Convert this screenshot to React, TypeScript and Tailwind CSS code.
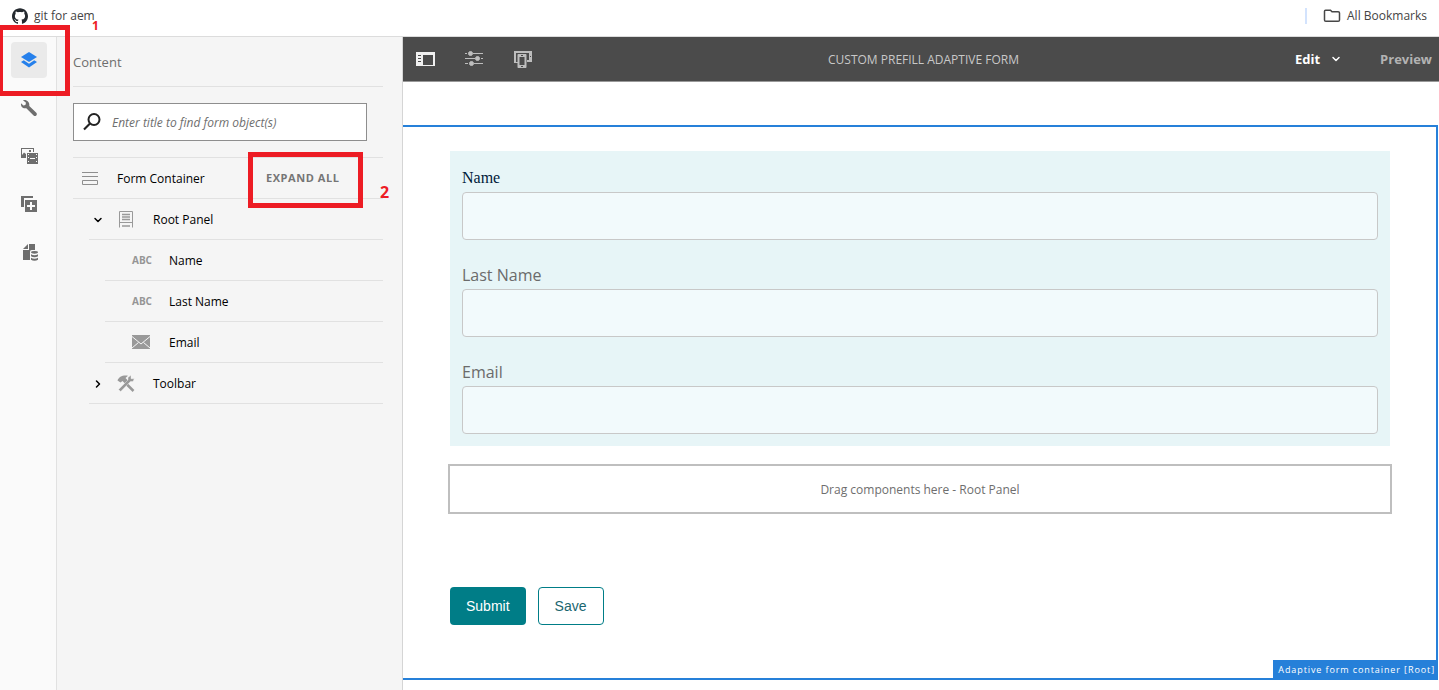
import React, { useState } from "react";
import { SiGithub } from "react-icons/si";
import { ChevronDown, ChevronRight } from "lucide-react";

interface TreeItem {
  id: string;
  title: string;
  icon: React.ReactNode;
}

const LayersIcon = () => (
  <svg viewBox="0 0 18 18" className="w-[18px] h-[18px]" fill="currentColor">
    <path d="M9 1 17 6 9 11 1 6Z" />
    <path d="M3.8 9.3 1 11l8 5.5 8-5.5-2.8-1.7L9 12.7Z" />
  </svg>
);

const WrenchIcon = () => (
  <svg viewBox="0 0 18 18" className="w-[18px] h-[18px]" fill="currentColor">
    <path d="M3 1.2 6 3.8 5.400 6 3.400 6.500 1 4.200C.5 7.500 3 10 6.300 9.200l7.300 7.300c.8.800 2 .8 2.700 0 .8-.8.800-1.900 0-2.700L9.300 7C9.900 3 6.500.2 3 1.200Z" />
  </svg>
);

const AssetsIcon = () => (
  <svg viewBox="0 0 18 18" className="w-[18px] h-[18px]" fill="currentColor">
    <path d="M1 1h13v4h-1V2H2v6l2-2.500L6 7v4H1Z" />
    <path d="M9 3h2v2H9Z" />
    <path fillRule="evenodd" d="M7 6h11v11H7Zm1 1v1h1V7Zm0 3v1h1v-1Zm0 4v1h1v-1Zm8-7v1h1V7Zm0 3v1h1v-1Zm0 4v1h1v-1ZM10 11v1h5v-1Z" />
  </svg>
);

const ComponentsIcon = () => (
  <svg viewBox="0 0 18 18" className="w-[18px] h-[18px]" fill="currentColor">
    <path d="M1 1h12v2H4v9H1Z" />
    <path fillRule="evenodd" d="M5 5h12v12H5Zm5 2v3H7v2h3v3h2v-3h3v-2h-3V7Z" />
  </svg>
);

const DataSourceIcon = () => (
  <svg viewBox="0 0 18 18" className="w-[18px] h-[18px]" fill="currentColor">
    <path d="M9 1h6v6h-3c-2 0-2 1-2 3v7H3V7h6Z" />
    <path d="M8 1v5H3Z" />
    <ellipse cx="14.500" cy="9.300" rx="3.500" ry="1.400" />
    <path d="M11 11.300c2 1.200 5 1.200 7 0v2c-2 1.200-5 1.200-7 0ZM11 14.800c2 1.200 5 1.200 7 0v2c-2 1.200-5 1.200-7 0Z" />
  </svg>
);

const SearchIcon = () => (
  <svg viewBox="0 0 18 18" className="w-[18px] h-[18px]" fill="none" stroke="#222" strokeWidth="2">
    <circle cx="11" cy="6.500" r="5.500" />
    <path d="M7 10.500 1 16.500" strokeWidth="2.200" />
  </svg>
);

const ContainerIcon = () => (
  <svg viewBox="0 0 18 18" className="w-[18px] h-[18px]" fill="none" stroke="#8e8e8e">
    <path d="M1 2.500h16M1 6.500h16M1.500 10.500h15v4h-15Z" />
  </svg>
);

const PanelIcon = () => (
  <svg viewBox="0 0 18 18" className="w-[18px] h-[18px]" fill="none" stroke="#999">
    <path d="M2.500 16.500V.5h13v16M2 11.500h14" />
    <path d="M5 3.500h8M5 6h8M5 8.500h8M5 15h8" strokeWidth="1.500" />
  </svg>
);

const MailIcon = () => (
  <svg viewBox="0 0 18 14" className="w-[18px] h-[14px]">
    <path d="M0 0h18v14H0Z" fill="#999" />
    <path d="M0 1.500 9 9l9-7.500M0 13l6.500-5.500M18 13l-6.500-5.500" fill="none" stroke="#f5f5f5" />
  </svg>
);

const ToolsIcon = () => (
  <svg viewBox="0 0 18 18" className="w-[18px] h-[18px]">
    <path d="M.5 5.500C2 2 5 0 11 .7L8.500 3l2.500 2.500L8 8.500 5.500 6 3.500 7.500Z" fill="#999" />
    <path d="m9 8.500 7.500 7.500" stroke="#999" strokeWidth="2.500" />
    <path d="M1.500 14.500 11 5V2.500L14 .3v3.400h3.200L16 6.500h-2.500l-9.800 10Z" fill="#999" stroke="#f5f5f5" strokeWidth=".4" />
  </svg>
);

const SidePanelIcon = () => (
  <svg viewBox="0 0 20 16" className="w-5 h-4">
    <path fillRule="evenodd" d="M1 1h19v14H1Zm7 3v10h10V4ZM3 4v1h3V4Zm0 3v1h3V7Zm0 3v1h3v-1Z" fill="#f0f0f0" />
  </svg>
);

const SlidersIcon = () => (
  <svg viewBox="0 0 20 18" className="w-5 h-[18px]" fill="#bdbdbd" stroke="#bdbdbd">
    <path d="M1 3.500h2M9 3.500h10M1 8.500h10M17 8.500h2M1 13.500h3M10 13.500h9" />
    <circle cx="6.500" cy="3.500" r="2" />
    <circle cx="13.500" cy="8.500" r="2" />
    <circle cx="7.500" cy="13.500" r="2" />
  </svg>
);

const EmulatorIcon = () => (
  <svg viewBox="0 0 20 18" className="w-5 h-[18px]" fill="#bdbdbd">
    <path fillRule="evenodd" d="M1 1h18v11h-5v-2h2V3H3v9h2v1H1Z" />
    <path d="M17 6h1v1h-1Z" fill="#4b4b4b" />
    <path fillRule="evenodd" d="M5.500 4h7c.6 0 1 .4 1 1v12c0 .6-.4 1-1 1h-7c-.6 0-1-.4-1-1V5c0-.6.4-1 1-1Zm1 3v8h5V7Zm1.500-2v1h2V5Zm0 11v1h2v-1Z" />
  </svg>
);

const FolderIcon = () => (
  <svg viewBox="0 0 18 14" className="w-[18px] h-[14px]" fill="none" stroke="#474747" strokeWidth="1.500">
    <path d="M1.500 2.200V11c0 .8.500 1.300 1.300 1.300h12.400c.8 0 1.300-.5 1.300-1.300V4c0-.8-.5-1.300-1.300-1.300H9L7.500 1.200h-5c-.6 0-1 .4-1 1Z" />
  </svg>
);

const AbcIcon = () => <span className="text-[10px] leading-4 font-bold text-[#959595]">ABC</span>;

const RAIL = [
  { label: "Content", icon: <LayersIcon /> },
  { label: "Properties", icon: <WrenchIcon /> },
  { label: "Assets", icon: <AssetsIcon /> },
  { label: "Components", icon: <ComponentsIcon /> },
  { label: "Data sources", icon: <DataSourceIcon /> },
];

const ROOT_ITEMS: TreeItem[] = [
  { id: "name", title: "Name", icon: <AbcIcon /> },
  { id: "lastName", title: "Last Name", icon: <AbcIcon /> },
  { id: "email", title: "Email", icon: <MailIcon /> },
];

const FIELDS = [
  { id: "name", label: "Name", type: "text", labelClass: "font-['Liberation_Serif'] text-[#001a3a]" },
  { id: "lastName", label: "Last Name", type: "text", labelClass: "text-[#6b6b6b]" },
  { id: "email", label: "Email", type: "email", labelClass: "text-[#6b6b6b]" },
];

export default function App() {
  const [activeTab, setActiveTab] = useState("Content");
  const [rootOpen, setRootOpen] = useState(true);

  return (
    <div className="relative min-h-screen flex flex-col bg-white font-['Open_Sans',sans-serif] text-xs">
      {/* Bookmarks bar */}
      <header className="h-[37px] flex items-center justify-between pl-3 pr-3 pb-1 border-b border-[#dcdcdc] text-[#444]">
        <a href="#git" className="flex items-center gap-1.5">
          <SiGithub className="w-4 h-4 text-[#24292f]" />
          git for aem
        </a>
        <div className="flex items-center gap-4">
          <span className="w-0.5 h-4 bg-[#d3e3fd]" />
          <a href="#bookmarks" className="flex items-center gap-1.5">
            <FolderIcon />
            All Bookmarks
          </a>
        </div>
      </header>

      <div className="flex flex-1">
        {/* Rail */}
        <nav className="w-[57px] shrink-0 bg-[#fafafa] border-r border-[#e1e1e1] flex flex-col items-start gap-3 pl-[11px] pt-[5px]">
          {RAIL.map((tab) => (
            <button
              key={tab.label}
              aria-label={tab.label}
              onClick={() => setActiveTab(tab.label)}
              className={`w-9 h-9 flex items-center justify-center rounded ${
                activeTab === tab.label ? "bg-[#eaeaea] text-[#2680eb]" : "text-[#6e6e6e]"
              }`}
            >
              {tab.icon}
            </button>
          ))}
        </nav>

        {/* Content tree */}
        <aside className="w-[346px] shrink-0 bg-[#f5f5f5] border-r border-[#d5d5d5] pl-4 pr-[19px]">
          <h2 className="h-[50px] flex items-center pt-0.5 border-b border-[#e1e1e1] text-[13px] text-[#6e6e6e]">
            Content
          </h2>
          <label className="mt-4 mr-4 h-[38px] flex items-center gap-[11px] pl-[9px] bg-white border border-[#8e8e8e]">
            <SearchIcon />
            <input
              type="search"
              aria-label="Find form object"
              placeholder="Enter title to find form object(s)"
              className="flex-1 min-w-0 pt-0.5 bg-transparent outline-none italic placeholder:text-[#6e6e6e]"
            />
          </label>

          <div className="mt-4 border-t border-[#e1e1e1] text-black">
            <div className="h-[41px] flex items-center pt-0.5 pl-2 border-b border-[#e1e1e1]">
              <ContainerIcon />
              <span className="ml-[18px] w-[149px]">Form Container</span>
              <button
                onClick={() => setRootOpen(true)}
                className="pb-0.5 text-[11px] font-bold tracking-wider text-[#757575]"
              >
                EXPAND ALL
              </button>
            </div>

            <div className="ml-4 h-[41px] flex items-center pt-0.5 border-b border-[#e1e1e1]">
              <button aria-label="Toggle Root Panel" onClick={() => setRootOpen(!rootOpen)} className="w-7 pl-[3px]">
                {rootOpen ? (
                  <ChevronDown className="w-3 h-3" strokeWidth={3} />
                ) : (
                  <ChevronRight className="w-3 h-3" strokeWidth={3} />
                )}
              </button>
              <PanelIcon />
              <span className="ml-[18px]">Root Panel</span>
            </div>

            {rootOpen &&
              ROOT_ITEMS.map((item) => (
                <div key={item.id} className="ml-8 h-[41px] flex items-center pt-0.5 border-b border-[#e1e1e1]">
                  <span className="w-16 pl-[27px] pb-0.5">{item.icon}</span>
                  {item.title}
                </div>
              ))}

            <div className="ml-4 h-[41px] flex items-center pt-0.5 border-b border-[#e1e1e1]">
              <button aria-label="Toggle Toolbar" className="w-7 pl-[3px]">
                <ChevronRight className="w-3 h-3" strokeWidth={3} />
              </button>
              <ToolsIcon />
              <span className="ml-[18px]">Toolbar</span>
            </div>
          </div>
        </aside>

        {/* Editor */}
        <main className="flex-1 min-w-0 flex flex-col">
          <div className="h-[45px] grid grid-cols-[1fr_auto_1fr] items-center pt-px bg-[#4b4b4b] border-b border-[#999] pl-3 pr-[7px]">
            <div className="flex items-center gap-[29px] pb-0.5">
              <button aria-label="Toggle side panel">
                <SidePanelIcon />
              </button>
              <button aria-label="Page information">
                <SlidersIcon />
              </button>
              <button aria-label="Emulator">
                <EmulatorIcon />
              </button>
            </div>
            <h1 className="text-[#c8c8c8]">CUSTOM PREFILL ADAPTIVE FORM</h1>
            <div className="flex items-center justify-end gap-[38px] text-[13px] font-bold">
              <button className="flex items-center gap-2.5 text-white">
                Edit
                <ChevronDown className="w-3 h-3" strokeWidth={3} />
              </button>
              <button className="text-[#b3b3b3]">Preview</button>
            </div>
          </div>

          <form
            onSubmit={(e) => e.preventDefault()}
            className="relative flex-1 mt-[43px] mr-px mb-2.5 pl-[45px] pr-11 pt-6 border-y-2 border-r-2 border-[#2680d9]"
          >
            <div className="mx-0.5 flex flex-col gap-[23px] px-3 pt-[15px] pb-3 bg-[#e7f5f7]">
              {FIELDS.map((field) => (
                <div key={field.id} className="flex flex-col gap-0.5">
                  <label htmlFor={field.id} className={`text-base leading-6 ${field.labelClass}`}>
                    {field.label}
                  </label>
                  <input
                    id={field.id}
                    type={field.type}
                    className="h-12 px-3 rounded bg-[#f2fafc] border border-[#c8c8c8] text-base"
                  />
                </div>
              ))}
            </div>

            <div className="mt-[18px] h-[50px] flex items-center justify-center pt-px border-2 border-[#bfbfbf] text-[#6e6e6e]">
              Drag components here - Root Panel
            </div>

            <div className="mt-[73px] ml-0.5 flex gap-3 font-['Liberation_Sans'] text-sm">
              <button type="submit" className="h-[38px] px-4 rounded bg-[#007d87] text-white">
                Submit
              </button>
              <button type="button" className="h-[38px] px-4 rounded border border-[#007d87] text-[#1a6670]">
                Save
              </button>
            </div>

            <span className="absolute right-0 -bottom-0.5 h-5 pl-[5px] pr-px pb-px flex items-center bg-[#2680d9] text-[9px] tracking-widest text-white">
              Adaptive form container [Root]
            </span>
          </form>
        </main>
      </div>

      {/* Step markers */}
      <div className="absolute left-0 top-[25px] w-[70px] h-[71px] border-5 border-l-3 border-[#ed1c24] pointer-events-none" />
      <span className="absolute left-[92px] top-[18px] text-xs leading-4 font-bold text-[#ed1c24]">1</span>
      <div className="absolute left-[248px] top-[152px] w-[115px] h-14 border-5 border-[#ed1c24] pointer-events-none" />
      <span className="absolute left-[380px] top-[182px] text-base leading-5 font-bold text-[#ed1c24]">2</span>
    </div>
  );
}
